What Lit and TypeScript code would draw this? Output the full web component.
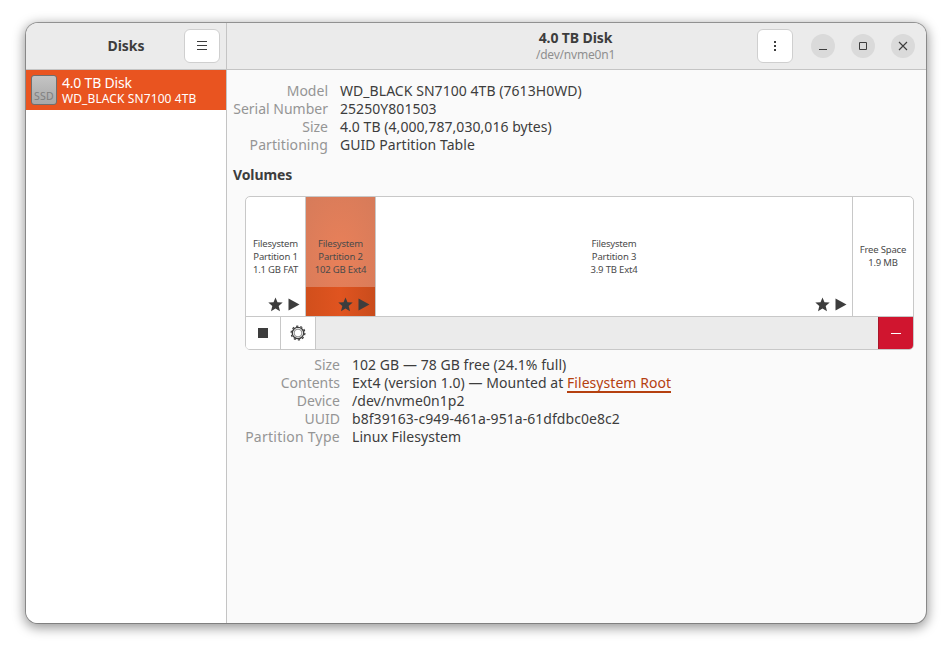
import { LitElement, html, css, svg } from "lit";
import { customElement } from "lit/decorators.js";

const star = svg`<path d="M7.5 .4 9.5 5.2 14.7 5.6 10.7 9 12 14.2 7.5 11.4 3 14.2 4.3 9 .3 5.6 5.5 5.2Z" fill="#3d3d3d"/>`;
const play = svg`<path d="M.5 .5 11.5 6.5 .5 12.5Z" fill="#3d3d3d"/>`;

@customElement("app-root")
export class AppRoot extends LitElement {
  static styles = css`
    :host { display: block; width: 952px; height: 652px; background: #fff; font-family: "Noto Sans", sans-serif; color: #3d3d3d; font-size: 14px; }
    * { box-sizing: border-box; }
    .page { padding: 23px 26px 29px; height: 652px; }
    .win { width: 900px; height: 600px; border-radius: 12px; background: #fafafa; overflow: hidden; display: flex; flex-direction: column; box-shadow: 0 0 0 1px rgba(90,90,90,.55), 0 3px 12px 2px rgba(0,0,0,.4); }
    .head { height: 47px; flex: none; display: flex; background: #ebebeb; border-bottom: 1px solid #c4c4c4; }
    .head-l { width: 201px; flex: none; border-right: 1px solid #c4c4c4; display: flex; align-items: center; padding: 0 6px 0 42px; }
    .head-l .t { flex: 1; text-align: center; font-weight: 700; line-height: 18px; }
    .btn { width: 36px; height: 34px; background: #fff; border: 1px solid #cfcfcf; border-radius: 6px; display: flex; align-items: center; justify-content: center; flex: none; }
    .head-r { flex: 1; display: flex; align-items: center; padding: 0 11px 0 167px; }
    .titles { flex: 1; text-align: center; }
    .titles b { display: block; font-size: 14px; line-height: 17px; letter-spacing: -.1px; }
    .titles span { display: block; font-size: 12px; line-height: 17px; color: #8f8f8f; letter-spacing: -.2px; }
    .ctl { width: 24px; height: 24px; border-radius: 50%; background: #dadada; display: flex; align-items: center; justify-content: center; flex: none; }
    .ctls { display: flex; gap: 16px; margin-left: 18px; }
    .body { flex: 1; display: flex; min-height: 0; }
    .side { width: 201px; flex: none; background: #fff; border-right: 1px solid #c4c4c4; }
    .row { height: 40px; background: #e95420; color: #fff; display: flex; align-items: center; padding-left: 5px; gap: 5px; width: 200px; }
    .disk { width: 26px; height: 30px; border-radius: 3px; border: 1px solid #6f6f6f; background: linear-gradient(#c4c4c4,#a8a8a8); display: flex; align-items: flex-end; justify-content: center; font-size: 10.5px; line-height: 15px; color: #808080; letter-spacing: .2px; }
    .row-t { display: flex; flex-direction: column; white-space: nowrap; padding-top: 1px; }
    .row-t .a { font-size: 14px; line-height: 16px; letter-spacing: -.2px; }
    .row-t .b { font-size: 12px; line-height: 16px; letter-spacing: .1px; }
    .main { flex: 1; min-width: 0; padding: 12px 12px 0 6px; }
    .kv { display: grid; grid-auto-rows: 18px; column-gap: 12px; line-height: 18px; font-size: 14px; letter-spacing: .05px; white-space: nowrap; }
    .k { text-align: right; color: #959595; letter-spacing: 0; }
    .k.wide { letter-spacing: .25px; }
    .k.mid { letter-spacing: .08px; }
    .kv.top { grid-template-columns: 95px auto; justify-content: start; }
    .kv.bot { grid-template-columns: 95px auto; justify-content: start; margin: 6px 0 0 12px; }
    .vol { font-weight: 700; line-height: 18px; margin-top: 12px; letter-spacing: -.1px; }
    .graph { margin: 12px 0 0 12px; width: 669px; height: 154px; border: 1px solid #c8c8c8; border-radius: 5px; overflow: hidden; background: #fff; display: flex; flex-direction: column; }
    .segs { display: flex; height: 119px; flex: none; }
    .seg { position: relative; display: flex; flex-direction: column; align-items: center; justify-content: center; font-size: 9.5px; line-height: 13px; color: #4a4a4a; border-right: 1px solid #c8c8c8; flex: none; letter-spacing: -.18px; }
    .seg:last-child { border-right: 0; flex: 1; }
    .seg:last-child .txt { margin-bottom: 2px; }
    .seg.sel { background: radial-gradient(ellipse at center, #e98059 0%, #d67b5a 100%); }
    .seg.sel::after { content: ""; position: absolute; left: 0; right: 0; bottom: 0; height: 29px; background: linear-gradient(90deg,#d14f1c,#e05420 50%,#c94c1c); }
    .marks { position: absolute; right: 5px; bottom: 4px; display: flex; gap: 5px; align-items: center; z-index: 1; }
    .seg .txt { text-align: center; white-space: nowrap; }
    .tools { flex: 1; display: flex; background: #ebebeb; border-top: 1px solid #c8c8c8; }
    .tool { width: 35px; background: #fff; border-right: 1px solid #c8c8c8; display: flex; align-items: center; justify-content: center; flex: none; }
    .del { margin-left: auto; width: 35px; background: #d0152f; border-left: 1px solid #a8162a; display: flex; align-items: center; justify-content: center; }
    .del i { display: block; width: 10px; height: 1px; background: #fff; }
    a { color: #b5400f; text-decoration: none; border-bottom: 2px solid #b5400f; display: inline-block; line-height: 16px; }
  `;

  private seg(w: number, lines: string[], marks = true, sel = false) {
    return html`<div class="seg ${sel ? "sel" : ""}" style="width:${w}px">
      <div class="txt">${lines.map((l) => html`<div>${l}</div>`)}</div>
      ${marks ? html`<div class="marks"><svg width="15" height="15" viewBox="0 0 15 15">${star}</svg><svg width="12" height="13" viewBox="0 0 12 13">${play}</svg></div>` : ""}
    </div>`;
  }

  render() {
    return html`<div class="page"><div class="win">
      <div class="head">
        <div class="head-l">
          <div class="t">Disks</div>
          <div class="btn"><svg width="12" height="10" viewBox="0 0 12 10"><path d="M1 .5H11M1 4.5H11M1 8.5H11" stroke="#3d3d3d" fill="none"/></svg></div>
        </div>
        <div class="head-r">
          <div class="titles"><b>4.0 TB Disk</b><span>/dev/nvme0n1</span></div>
          <div class="btn"><svg width="4" height="12" viewBox="0 0 4 12"><path d="M1 1H3V3H1ZM1 5H3V7H1ZM1 9H3V11H1Z" fill="#3d3d3d"/></svg></div>
          <div class="ctls">
            <div class="ctl"><svg width="10" height="10" viewBox="0 0 10 10"><path d="M1 8.5H9" stroke="#3d3d3d" fill="none"/></svg></div>
            <div class="ctl"><svg width="10" height="10" viewBox="0 0 10 10"><path d="M1.5 1.5H8.5V8.5H1.5Z" stroke="#3d3d3d" fill="none"/></svg></div>
            <div class="ctl"><svg width="10" height="10" viewBox="0 0 10 10"><path d="M1 1 9 9M9 1 1 9" stroke="#3d3d3d" fill="none" stroke-width="1.1"/></svg></div>
          </div>
        </div>
      </div>
      <div class="body">
        <div class="side">
          <div class="row"><div class="disk">SSD</div><div class="row-t"><span class="a">4.0 TB Disk</span><span class="b">WD_BLACK SN7100 4TB</span></div></div>
        </div>
        <div class="main">
          <div class="kv top">
            <div class="k">Model</div><div>WD_BLACK SN7100 4TB (7613H0WD)</div>
            <div class="k">Serial Number</div><div>25250Y801503</div>
            <div class="k">Size</div><div>4.0 TB (4,000,787,030,016 bytes)</div>
            <div class="k mid">Partitioning</div><div>GUID Partition Table</div>
          </div>
          <div class="vol">Volumes</div>
          <div class="graph">
            <div class="segs">
              ${this.seg(60, ["Filesystem", "Partition 1", "1.1 GB FAT"])}
              ${this.seg(70, ["Filesystem", "Partition 2", "102 GB Ext4"], true, true)}
              ${this.seg(477, ["Filesystem", "Partition 3", "3.9 TB Ext4"])}
              ${this.seg(60, ["Free Space", "1.9 MB"], false)}
            </div>
            <div class="tools">
              <div class="tool"><svg width="10" height="10" viewBox="0 0 10 10"><path d="M0 0H10V10H0Z" fill="#3d3d3d"/></svg></div>
              <div class="tool"><svg width="16" height="16" viewBox="0 0 16 16"><circle cx="8" cy="8" r="5.7" fill="none" stroke="#3d3d3d" stroke-width="1.3"/><circle cx="8" cy="8" r="3.9" fill="none" stroke="#6a6a6a" stroke-width=".8"/><circle cx="8" cy="8" r="6.9" fill="none" stroke="#3d3d3d" stroke-width="1.2" stroke-dasharray="2.2 2.14"/></svg></div>
              <div class="del"><i></i></div>
            </div>
          </div>
          <div class="kv bot">
            <div class="k">Size</div><div>102 GB — 78 GB free (24.1% full)</div>
            <div class="k">Contents</div><div>Ext4 (version 1.0) — Mounted at <a>Filesystem Root</a></div>
            <div class="k">Device</div><div>/dev/nvme0n1p2</div>
            <div class="k">UUID</div><div>b8f39163-c949-461a-951a-61dfdbc0e8c2</div>
            <div class="k wide">Partition Type</div><div>Linux Filesystem</div>
          </div>
        </div>
      </div>
    </div></div>`;
  }
}
